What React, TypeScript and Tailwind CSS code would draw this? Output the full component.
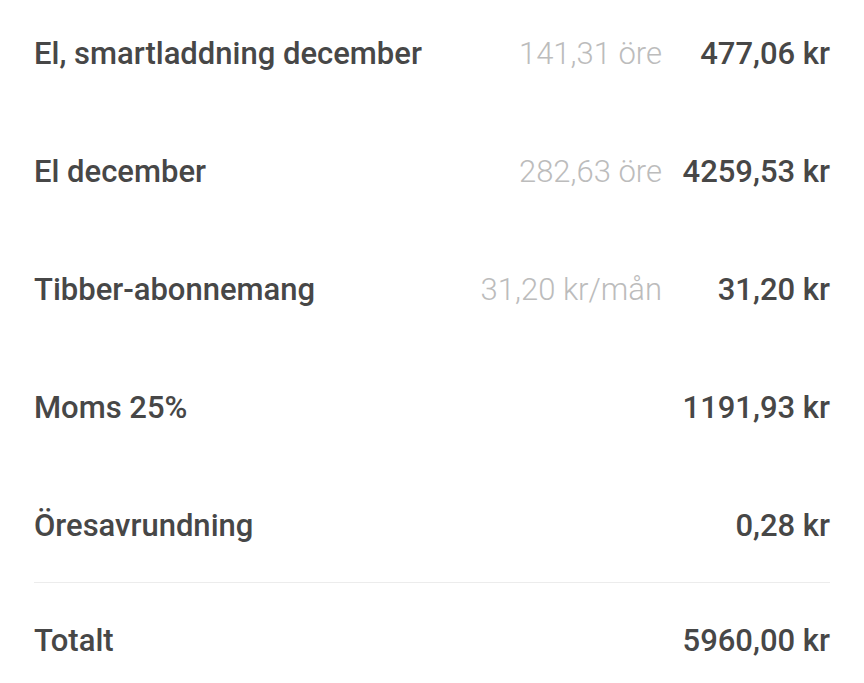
const rows = [
  { label: "El, smartladdning december", unit: "141,31 öre", amount: "477,06 kr" },
  { label: "El december", unit: "282,63 öre", amount: "4259,53 kr" },
  { label: "Tibber-abonnemang", unit: "31,20 kr/mån", amount: "31,20 kr" },
  { label: "Moms 25%", unit: "", amount: "1191,93 kr" },
  { label: "Öresavrundning", unit: "", amount: "0,28 kr" }
];

function Row({ label, unit, amount }: { label: string; unit: string; amount: string }) {
  return (
    <div className="flex h-[36px] items-center">
      <span className="flex-1 font-medium text-[#474747]">{label}</span>
      <span className="font-light text-[#bcbcbc]">{unit}</span>
      <span className="w-[168px] text-right font-medium text-[#474747]">{amount}</span>
    </div>
  );
}

export default function App() {
  return (
    <main
      className="min-h-screen bg-white px-[34px] pt-[36px] text-[31px] leading-[36px]"
      style={{ fontFamily: "Roboto, 'Noto Sans', sans-serif" }}
    >
      <div className="flex flex-col gap-[82px]">
        {rows.map((r) => (
          <Row key={r.label} {...r} />
        ))}
      </div>
      <div className="mt-[38px] h-px bg-[#ececec]" />
      <div className="mt-[40px] flex h-[36px] items-center">
        <span className="flex-1 font-medium text-[#474747]">Totalt</span>
        <span className="font-medium text-[#474747]">5960,00 kr</span>
      </div>
    </main>
  );
}
